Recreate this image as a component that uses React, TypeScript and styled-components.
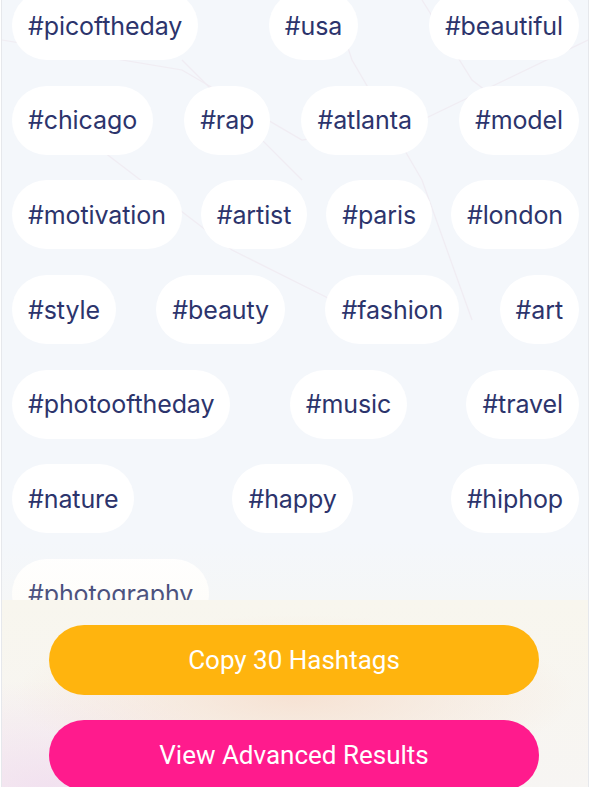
import React from "react";
import styled, { createGlobalStyle } from "styled-components";

const Global = createGlobalStyle`
  html, body { margin: 0; padding: 0; background: #ffffff; }
  body { width: 590px; height: 787px; overflow: hidden; }
`;

const Frame = styled.div`
  position: relative;
  width: 586px;
  height: 787px;
  margin-left: 1px;
  border-left: 1px solid #e6e8ec;
  border-right: 1px solid #e6e8ec;
  background: #f4f7fb;
  display: flex;
  flex-direction: column;
  overflow: hidden;
`;

const Decor = styled.svg`
  position: absolute;
  left: 0;
  top: 0;
  pointer-events: none;
`;

const ChipArea = styled.div`
  position: relative;
  height: 600px;
  overflow: hidden;
  flex: none;
`;

const ChipList = styled.div`
  display: flex;
  flex-direction: column;
  gap: 25.7px;
  padding: 0 9px 0 10px;
  margin-top: -9px;
`;

const Row = styled.div`
  display: flex;
  justify-content: space-between;
`;

const Chip = styled.div`
  height: 69px;
  display: flex;
  align-items: center;
  padding: 0 16px;
  border-radius: 35px;
  background: #ffffff;
  color: #2c346c;
  font-family: Inter, "Noto Sans", sans-serif;
  font-size: 25px;
  letter-spacing: -0.1px;
  white-space: nowrap;
`;

const Footer = styled.div`
  position: relative;
  flex: 1;
  display: flex;
  flex-direction: column;
  align-items: center;
  gap: 25px;
  padding-top: 25px;
  background:
    radial-gradient(ellipse 280px 80px at 50% 50%, rgba(246, 224, 208, 0.9), rgba(246, 224, 208, 0) 100%),
    radial-gradient(ellipse 220px 110px at 8% 100%, rgba(240, 218, 238, 0.75), rgba(240, 218, 238, 0) 100%),
    linear-gradient(180deg, #f8f6ee 0%, #f7f5f3 100%);
  &::before {
    content: "";
    position: absolute;
    left: 0;
    right: 0;
    top: -60px;
    height: 60px;
    background: linear-gradient(180deg, rgba(248, 246, 236, 0) 0%, rgba(250, 244, 228, 0.18) 100%);
    pointer-events: none;
  }
`;

const ActionButton = styled.button<{ $bg: string }>`
  width: 490px;
  height: 70px;
  flex: none;
  border: none;
  border-radius: 35px;
  background: ${(p) => p.$bg};
  color: #ffffff;
  font-family: Roboto, "Liberation Sans", sans-serif;
  font-size: 26px;
  font-weight: 400;
  display: flex;
  align-items: center;
  justify-content: center;
  padding: 0;
  margin-left: -2px;
`;

const rows: string[][] = [
  ["#picoftheday", "#usa", "#beautiful"],
  ["#chicago", "#rap", "#atlanta", "#model"],
  ["#motivation", "#artist", "#paris", "#london"],
  ["#style", "#beauty", "#fashion", "#art"],
  ["#photooftheday", "#music", "#travel"],
  ["#nature", "#happy", "#hiphop"],
  ["#photography"],
];

export default function App() {
  return (
    <>
      <Global />
      <Frame>
        <Decor width="586" height="600" viewBox="0 0 586 600">
          <g stroke="#eee3ec" strokeWidth="1.2" fill="none" opacity="0.5">
            <path d="M0 40 L180 70 L300 140 L420 120 L586 40" />
            <path d="M60 120 L230 250 L330 300" />
            <path d="M330 0 L350 60 L420 180 L470 320" />
            <path d="M420 0 L470 80 L560 150" />
            <path d="M180 60 L240 120 L300 180" />
          </g>
        </Decor>
        <ChipArea>
          <ChipList>
            {rows.map((r, i) => (
              <Row key={i}>
                {r.map((t) => (
                  <Chip key={t}>{t}</Chip>
                ))}
              </Row>
            ))}
          </ChipList>
        </ChipArea>
        <Footer>
          <ActionButton $bg="#ffb40e">Copy 30 Hashtags</ActionButton>
          <ActionButton $bg="#ff1b8d">View Advanced Results</ActionButton>
        </Footer>
      </Frame>
    </>
  );
}
